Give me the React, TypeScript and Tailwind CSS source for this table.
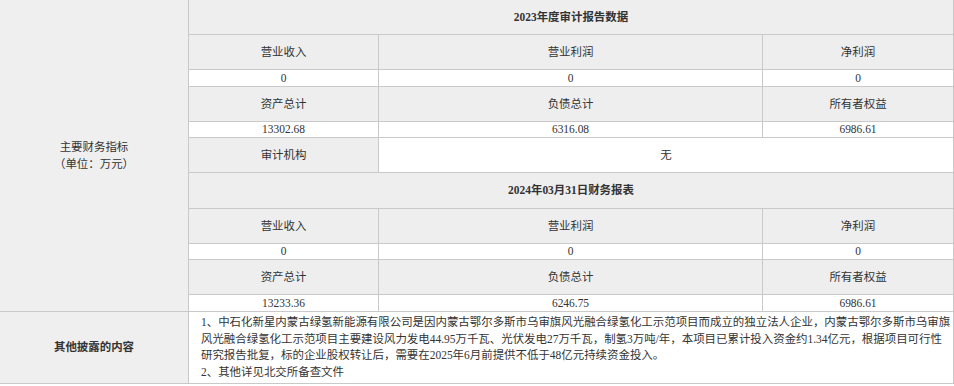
const line = "border-[#c9c9c9]";

type Cell = { text: string; bold?: boolean };

function Row({
  cells,
  h,
  gray,
  last,
}: {
  cells: string[];
  h: string;
  gray?: boolean;
  last?: boolean;
}) {
  const widths = ["w-[190px] border-r", "w-[384px] border-r", "flex-1"];
  return (
    <div
      className={`flex ${h} ${last ? "" : "border-b"} ${line} ${
        gray ? "bg-[#eeeeee]" : "bg-white"
      }`}
    >
      {cells.map((c, i) => (
        <div
          key={i}
          className={`${widths[i]} ${line} flex items-center justify-center`}
        >
          {c}
        </div>
      ))}
    </div>
  );
}

function Title({ text, h }: { text: string; h: string }) {
  return (
    <div
      className={`flex ${h} items-center justify-center border-b ${line} bg-[#eeeeee] font-bold`}
    >
      {text}
    </div>
  );
}

export default function App() {
  return (
    <div className="w-[954px] bg-white font-['Liberation_Serif','Noto_Sans_CJK_SC',serif] text-[11.45px] leading-[16.7px] text-[#333333]">
      <div className={`flex border-b ${line}`}>
        <div
          className={`flex w-[189px] shrink-0 flex-col items-center justify-center border-r ${line} bg-[#efefef] text-center`}
        >
          <span>主要财务指标</span>
          <span>（单位：万元）</span>
        </div>
        <div className={`w-[765px] border-r ${line}`}>
          <Title text="2023年度审计报告数据" h="h-[35px]" />
          <Row cells={["营业收入", "营业利润", "净利润"]} h="h-[35px]" gray />
          <Row cells={["0", "0", "0"]} h="h-[17px]" />
          <Row cells={["资产总计", "负债总计", "所有者权益"]} h="h-[35px]" gray />
          <Row cells={["13302.68", "6316.08", "6986.61"]} h="h-[16px]" />
          <div className={`flex h-[35px] border-b ${line}`}>
            <div
              className={`flex w-[190px] items-center justify-center border-r ${line} bg-[#eeeeee]`}
            >
              审计机构
            </div>
            <div className="flex flex-1 items-center justify-center bg-white">
              无
            </div>
          </div>
          <Title text="2024年03月31日财务报表" h="h-[36px]" />
          <Row cells={["营业收入", "营业利润", "净利润"]} h="h-[35px]" gray />
          <Row cells={["0", "0", "0"]} h="h-[16px]" />
          <Row cells={["资产总计", "负债总计", "所有者权益"]} h="h-[35px]" gray />
          <Row cells={["13233.36", "6246.75", "6986.61"]} h="h-[16px]" last />
        </div>
      </div>
      <div className={`flex h-[72px] border-b ${line}`}>
        <div
          className={`flex w-[189px] shrink-0 items-center justify-center border-r ${line} bg-[#efefef] font-bold`}
        >
          其他披露的内容
        </div>
        <div
          className={`w-[765px] border-r ${line} bg-white pl-[12px] pt-[2px] whitespace-nowrap`}
        >
          1、中石化新星内蒙古绿氢新能源有限公司是因内蒙古鄂尔多斯市乌审旗风光融合绿氢化工示范项目而成立的独立法人企业，内蒙古鄂尔多斯市乌审旗
          <br />
          风光融合绿氢化工示范项目主要建设风力发电44.95万千瓦、光伏发电27万千瓦，制氢3万吨/年，本项目已累计投入资金约1.34亿元，根据项目可行性
          <br />
          研究报告批复，标的企业股权转让后，需要在2025年6月前提供不低于48亿元持续资金投入。
          <br />
          2、其他详见北交所备查文件
        </div>
      </div>
    </div>
  );
}
